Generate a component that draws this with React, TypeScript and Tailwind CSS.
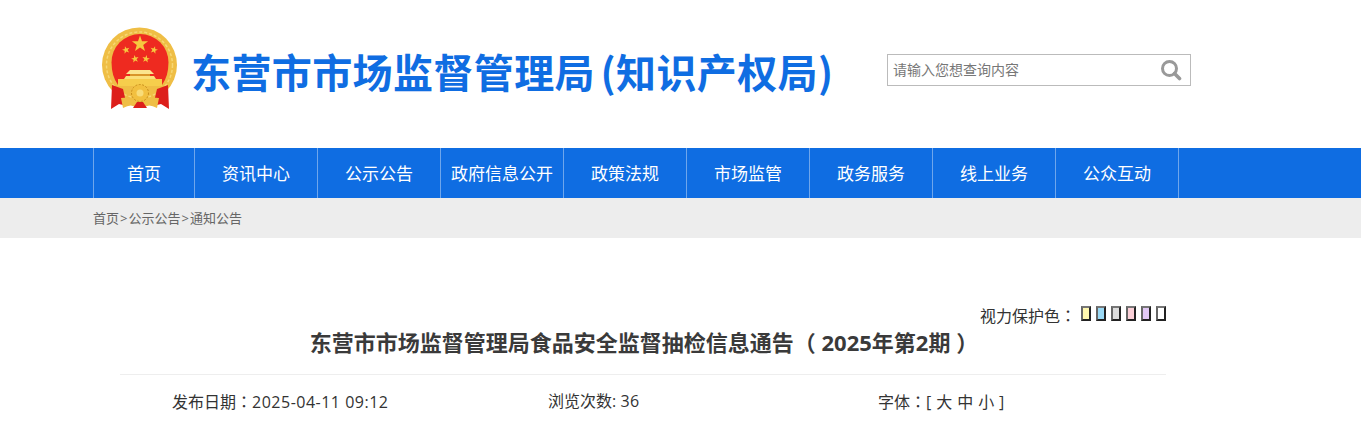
const cjk = "font-['Open_Sans','Noto_Sans_CJK_SC',sans-serif]"

const navItems = ['资讯中心', '公示公告', '政府信息公开', '政策法规', '市场监管', '政务服务', '线上业务', '公众互动']
const swatches = ['bg-[#fff8b0]', 'bg-[#9ad9f5]', 'bg-[#dddddd]', 'bg-[#fbd0d8]', 'bg-[#e2c8f5]', 'bg-white']

const star = (cx: number, cy: number, r: number, rot = 0) => {
  const pts: string[] = []
  for (let i = 0; i < 10; i++) {
    const rad = i % 2 === 0 ? r : r * 0.4
    const a = ((-90 + rot + i * 36) * Math.PI) / 180
    pts.push(`${(cx + rad * Math.cos(a)).toFixed(2)},${(cy + rad * Math.sin(a)).toFixed(2)}`)
  }
  return pts.join(' ')
}

const Emblem = () => (
  <svg width="80" height="84" viewBox="0 0 80 84" className="shrink-0">
    {/* wreath */}
    <circle cx="39.5" cy="39" r="37.5" fill="#efbe45" />
    <circle cx="39.5" cy="39" r="33" fill="none" stroke="#f7d774" strokeWidth="1.5" strokeDasharray="3 2" />
    <path d="M11.5 36.5 A28.5 28.5 0 0 1 68.5 36.5 Q68.5 50 62 59 H18 Q11.5 50 11.5 36.5 Z" fill="#ee2a20" />
    {/* stars */}
    <polygon points={star(40, 18, 8.5)} fill="#f6c93f" />
    <polygon points={star(26, 24, 4, -15)} fill="#f6c93f" />
    <polygon points={star(35, 33, 4, -10)} fill="#f6c93f" />
    <polygon points={star(46, 33, 4, 10)} fill="#f6c93f" />
    <polygon points={star(54, 24, 4, 15)} fill="#f6c93f" />
    {/* gate */}
    <path d="M30 44 H50 L54 48 H26 Z" fill="#fbe58e" />
    <path d="M30 48 H50 V50 H30 Z" fill="#d9962a" />
    <path d="M26 50 H54 L56 53 H24 Z" fill="#fbe07a" />
    <path d="M18 53 H62 V60 H18 Z" fill="#f6cd4c" />
    {/* red ribbons */}
    <path d="M12 59 L23 63 L27 80 L19 78 L11 83 Z" fill="#dd1f1b" />
    <path d="M68 59 L57 63 L53 80 L61 78 L69 83 Z" fill="#dd1f1b" />
    {/* bottom bow and cog */}
    <path d="M21 72 Q32 70 36 75 H44 Q48 70 59 72 L57 82 Q48 77 44 82 H36 Q32 77 23 82 Z" fill="#efbe45" />
    <path d="M33 82 L37 76 H43 L47 82 Z" fill="#dd1f1b" />
    <circle cx="40" cy="67" r="8.5" fill="#f2c040" stroke="#c98f1c" strokeWidth="1" strokeDasharray="2 1.5" />
    <circle cx="40" cy="67" r="3.5" fill="#f8dc7a" />
  </svg>
)

const SearchIcon = () => (
  <svg width="22" height="22" viewBox="0 0 22 22" fill="none">
    <circle cx="9.5" cy="9.5" r="7" stroke="#999" strokeWidth="3" />
    <path d="M14.5 14.5 L19.5 19.5" stroke="#999" strokeWidth="3.6" strokeLinecap="round" />
  </svg>
)

// full-width colon centred like the reference
const Colon = () => <span className="font-['Noto_Sans_CJK_TC',sans-serif]">：</span>

export default function App() {
  return (
    <div className={`${cjk} h-[430px] overflow-hidden bg-white`}>
      <header className="h-[148px]">
        <div className="mx-auto flex w-[1175px] items-start">
          <div className="ml-[7px] mt-[26px]">
            <Emblem />
          </div>
          <h1 className="ml-[11px] mt-[42px] w-[644px] whitespace-nowrap font-['Noto_Sans_CJK_SC',sans-serif] text-[40px] font-bold leading-[58px] tracking-[0.4px] text-[#0f6de2] [word-spacing:-4px]">
            东营市市场监督管理局 (知识产权局)
          </h1>
          <div className="ml-[52px] mt-[54px] flex h-[32px] w-[304px] items-center justify-between border border-[#bbbbbb] pl-[5px] pr-[8px]">
            <span className="pb-[2px] text-[14px] text-[#777777]">请输入您想查询内容</span>
            <SearchIcon />
          </div>
        </div>
      </header>

      <nav className="h-[50px] bg-[#0f6de2]">
        <ul className="mx-auto flex h-full w-[1175px] text-[17px] text-white">
          <li className="flex h-full w-[102px] items-center justify-center border-x border-[#6ea6ec] pt-px">首页</li>
          {navItems.map((item) => (
            <li key={item} className="flex h-full w-[123px] items-center justify-center border-r border-[#6ea6ec] pt-px">
              {item}
            </li>
          ))}
        </ul>
      </nav>

      <div className="h-[40px] bg-[#ededed]">
        <div className="mx-auto w-[1175px] text-[13px] leading-[40px] text-[#666666]">
          首页<span className="px-px">&gt;</span>公示公告<span className="px-px">&gt;</span>通知公告
        </div>
      </div>

      <main className="mx-auto w-[1175px] pt-[65px]">
        <div className="flex h-[24px] items-center justify-end pr-[102px] text-[16px] text-[#333333]">
          <span className="mr-[5px]">视力保护色<Colon /></span>
          <div className="mb-[3px] flex gap-[5px]">
            {swatches.map((c) => (
              <i key={c} className={`block h-[15px] w-[10px] border-2 border-b-[#222222] border-l-[#666666] border-r-[#222222] border-t-[#777777] ${c}`} />
            ))}
          </div>
        </div>
        <div className="ml-[27px] w-[1046px]">
          <h2 className="border-b border-[#eeeeee] pb-[17px] pl-[2px] text-center text-[22px] font-bold leading-[30px] text-[#3a3a3a]">
            东营市市场监督管理局食品安全监督抽检信息通告（ 2025年第2期 ）
          </h2>
          <div className="flex pt-[14px] text-[16px] leading-[24px] text-[#333333]">
            <span className="ml-[52px] w-[376px]">发布日期<Colon /><span className="tracking-[0.5px]">2025-04-11 09:12</span></span>
            <span className="w-[330px]">浏览次数: <span className="tracking-[0.5px]">36</span></span>
            <span>字体<Colon /><span className="tracking-[0.4px]">[ 大 中 小 ]</span></span>
          </div>
        </div>
      </main>
    </div>
  )
}
